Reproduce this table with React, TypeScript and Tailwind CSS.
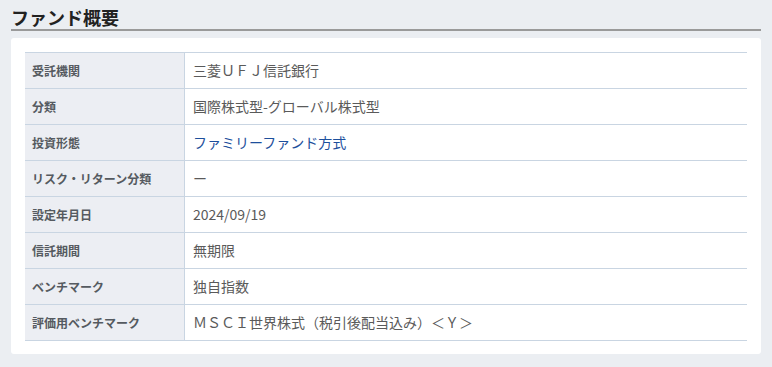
import React from "react";

const rows: { label: string; value: string; link?: boolean }[] = [
  { label: "受託機関", value: "三菱ＵＦＪ信託銀行" },
  { label: "分類", value: "国際株式型-グローバル株式型" },
  { label: "投資形態", value: "ファミリーファンド方式", link: true },
  { label: "リスク・リターン分類", value: "ー" },
  { label: "設定年月日", value: "2024/09/19" },
  { label: "信託期間", value: "無期限" },
  { label: "ベンチマーク", value: "独自指数" },
  { label: "評価用ベンチマーク", value: "ＭＳＣＩ世界株式（税引後配当込み）＜Ｙ＞" },
];

export default function App() {
  return (
    <div
      className="w-[772px] h-[367px] bg-[#ebeef2] px-[11px] overflow-hidden"
      style={{ fontFamily: '"Noto Sans CJK JP", "Noto Sans", sans-serif' }}
    >
      <div className="pt-[5px] h-[31px] border-b-2 border-[#9a9a9a] w-[750px]">
        <h2 className="text-[18px] leading-[24px] font-bold text-[#222]">ファンド概要</h2>
      </div>
      <div className="mt-[7px] w-[750px] bg-white rounded-[3px] px-[14px] pt-[14px] pb-[13px]">
        <div className="border-t border-[#c9d5e2]">
          {rows.map((r) => (
            <div key={r.label} className="flex h-[36px] border-b border-[#c9d5e2]">
              <div className="w-[160px] shrink-0 bg-[#eceef3] border-r border-[#c9d5e2] flex items-center pl-[7px] text-[12px] font-bold text-[#555a60]">
                {r.label}
              </div>
              <div
                className={`flex items-center pl-[8px] text-[14px] ${
                  r.link ? "text-[#1d4f9c]" : "text-[#5a5a5a]"
                }`}
              >
                {r.value}
              </div>
            </div>
          ))}
        </div>
      </div>
    </div>
  );
}
